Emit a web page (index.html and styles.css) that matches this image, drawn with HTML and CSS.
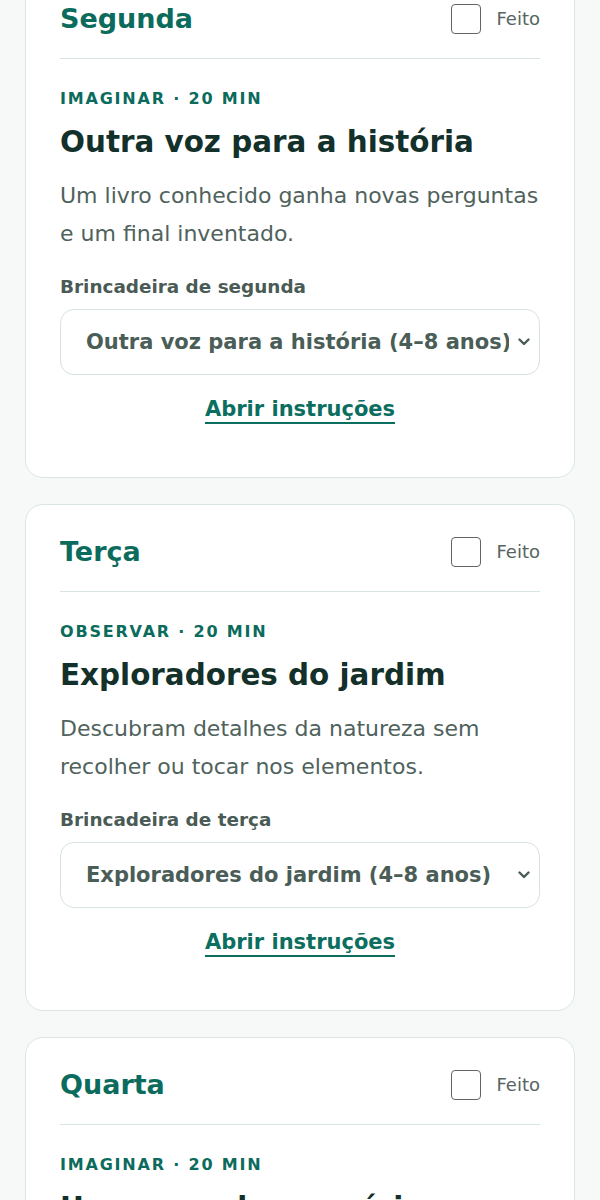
FILE: index.html
```html
<!DOCTYPE html>
<html lang="pt">
<head>
    <meta charset="utf-8">
    <meta name="viewport" content="width=device-width, initial-scale=1">
    <title>Semana de brincadeiras</title>
    <link rel="stylesheet" href="styles.css">
</head>
<body>
    <main class="week">

        <section class="day-card">
            <header class="day-head">
                <h2>Segunda</h2>
                <label class="done">
                    <input type="checkbox">
                    <span>Feito</span>
                </label>
            </header>
            <p class="eyebrow">Imaginar · 20 min</p>
            <h3 class="activity-title">Outra voz para a história</h3>
            <p class="activity-desc">Um livro conhecido ganha novas perguntas e um final inventado.</p>
            <label class="pick-label" for="pick-seg">Brincadeira de segunda</label>
            <div class="pick-wrap">
                <select id="pick-seg" class="pick">
                    <option>Outra voz para a história (4–8 anos)</option>
                </select>
                <svg class="chevron" viewBox="0 0 12 8" width="12" height="8"><path d="M1.5 1.5 6 6l4.5-4.5"/></svg>
            </div>
            <div class="link-row">
                <a href="#" class="open-link">Abrir instruções</a>
            </div>
        </section>

        <section class="day-card">
            <header class="day-head">
                <h2>Terça</h2>
                <label class="done">
                    <input type="checkbox">
                    <span>Feito</span>
                </label>
            </header>
            <p class="eyebrow">Observar · 20 min</p>
            <h3 class="activity-title">Exploradores do jardim</h3>
            <p class="activity-desc">Descubram detalhes da natureza sem recolher ou tocar nos elementos.</p>
            <label class="pick-label" for="pick-ter">Brincadeira de terça</label>
            <div class="pick-wrap">
                <select id="pick-ter" class="pick">
                    <option>Exploradores do jardim (4–8 anos)</option>
                </select>
                <svg class="chevron" viewBox="0 0 12 8" width="12" height="8"><path d="M1.5 1.5 6 6l4.5-4.5"/></svg>
            </div>
            <div class="link-row">
                <a href="#" class="open-link">Abrir instruções</a>
            </div>
        </section>

        <section class="day-card">
            <header class="day-head">
                <h2>Quarta</h2>
                <label class="done">
                    <input type="checkbox">
                    <span>Feito</span>
                </label>
            </header>
            <p class="eyebrow">Imaginar · 20 min</p>
            <h3 class="activity-title">Um mapa de memórias</h3>
            <p class="activity-desc">Desenhem juntos os lugares favoritos da família e contem porquê.</p>
            <label class="pick-label" for="pick-qua">Brincadeira de quarta</label>
            <div class="pick-wrap">
                <select id="pick-qua" class="pick">
                    <option>Um mapa de memórias (4–8 anos)</option>
                </select>
                <svg class="chevron" viewBox="0 0 12 8" width="12" height="8"><path d="M1.5 1.5 6 6l4.5-4.5"/></svg>
            </div>
            <div class="link-row">
                <a href="#" class="open-link">Abrir instruções</a>
            </div>
        </section>

    </main>
</body>
</html>
```

FILE: styles.css
```css
body {
    margin: 0;
    background: #f6f9f8;
    font-family: "DejaVu Sans", Verdana, sans-serif;
    color: #17302a;
}
.week {
    /* page is shown scrolled a little past the first card's top */
    margin-top: -29px;
    padding: 0 25px 40px;
    display: flex;
    flex-direction: column;
    gap: 26px;
}
.day-card {
    background: #fff;
    border: 1px solid #dae6e2;
    border-radius: 18px;
    padding: 0 34px 56px;
}
.day-head {
    display: flex;
    justify-content: space-between;
    align-items: center;
    height: 79px;
    padding-top: 7px;
    border-bottom: 1px solid #d6e3df;
}
.day-head h2 {
    margin: 0;
    font-size: 27px;
    font-weight: bold;
    color: #0b6b5c;
}
.done {
    display: flex;
    align-items: center;
    gap: 15px;
    font-size: 18px;
    color: #56655f;
}
.done input {
    appearance: none;
    margin: 0;
    width: 30px;
    height: 30px;
    border: 1.5px solid #5f6663;
    border-radius: 4px;
    background: #fff;
}
.eyebrow {
    margin: 30px 0 0;
    font-size: 16px;
    font-weight: bold;
    letter-spacing: 1.8px;
    text-transform: uppercase;
    color: #0b6b5c;
    line-height: 20px;
}
.activity-title {
    margin: 14px 0 0;
    font-size: 29.4px;
    line-height: 38px;
    color: #13302a;
}
.activity-desc {
    margin: 16px 0 0;
    font-size: 22px;
    line-height: 38px;
    color: #4f625c;
}
.pick-label {
    display: block;
    margin-top: 23px;
    font-size: 18.4px;
    font-weight: bold;
    line-height: 22px;
    color: #4a5b56;
}
.pick-wrap {
    position: relative;
    margin-top: 11px;
}
.pick {
    appearance: none;
    display: block;
    width: 100%;
    height: 66px;
    margin: 0;
    padding: 0 30px 0 25px;
    border: 1px solid #d6e3df;
    border-radius: 14px;
    background: #fff;
    font-family: inherit;
    font-size: 21px;
    font-weight: bold;
    color: #4a5d57;
}
.chevron {
    position: absolute;
    right: 10px;
    top: 29px;
    fill: none;
    stroke: #4a5d57;
    stroke-width: 2.4;
    stroke-linecap: round;
    stroke-linejoin: round;
    pointer-events: none;
}
.link-row {
    text-align: center;
    margin-top: 22px;
}
.open-link {
    font-size: 21px;
    font-weight: bold;
    color: #0b6e5f;
    text-decoration: underline;
    text-decoration-thickness: 2px;
    text-underline-offset: 6px;
}
```
